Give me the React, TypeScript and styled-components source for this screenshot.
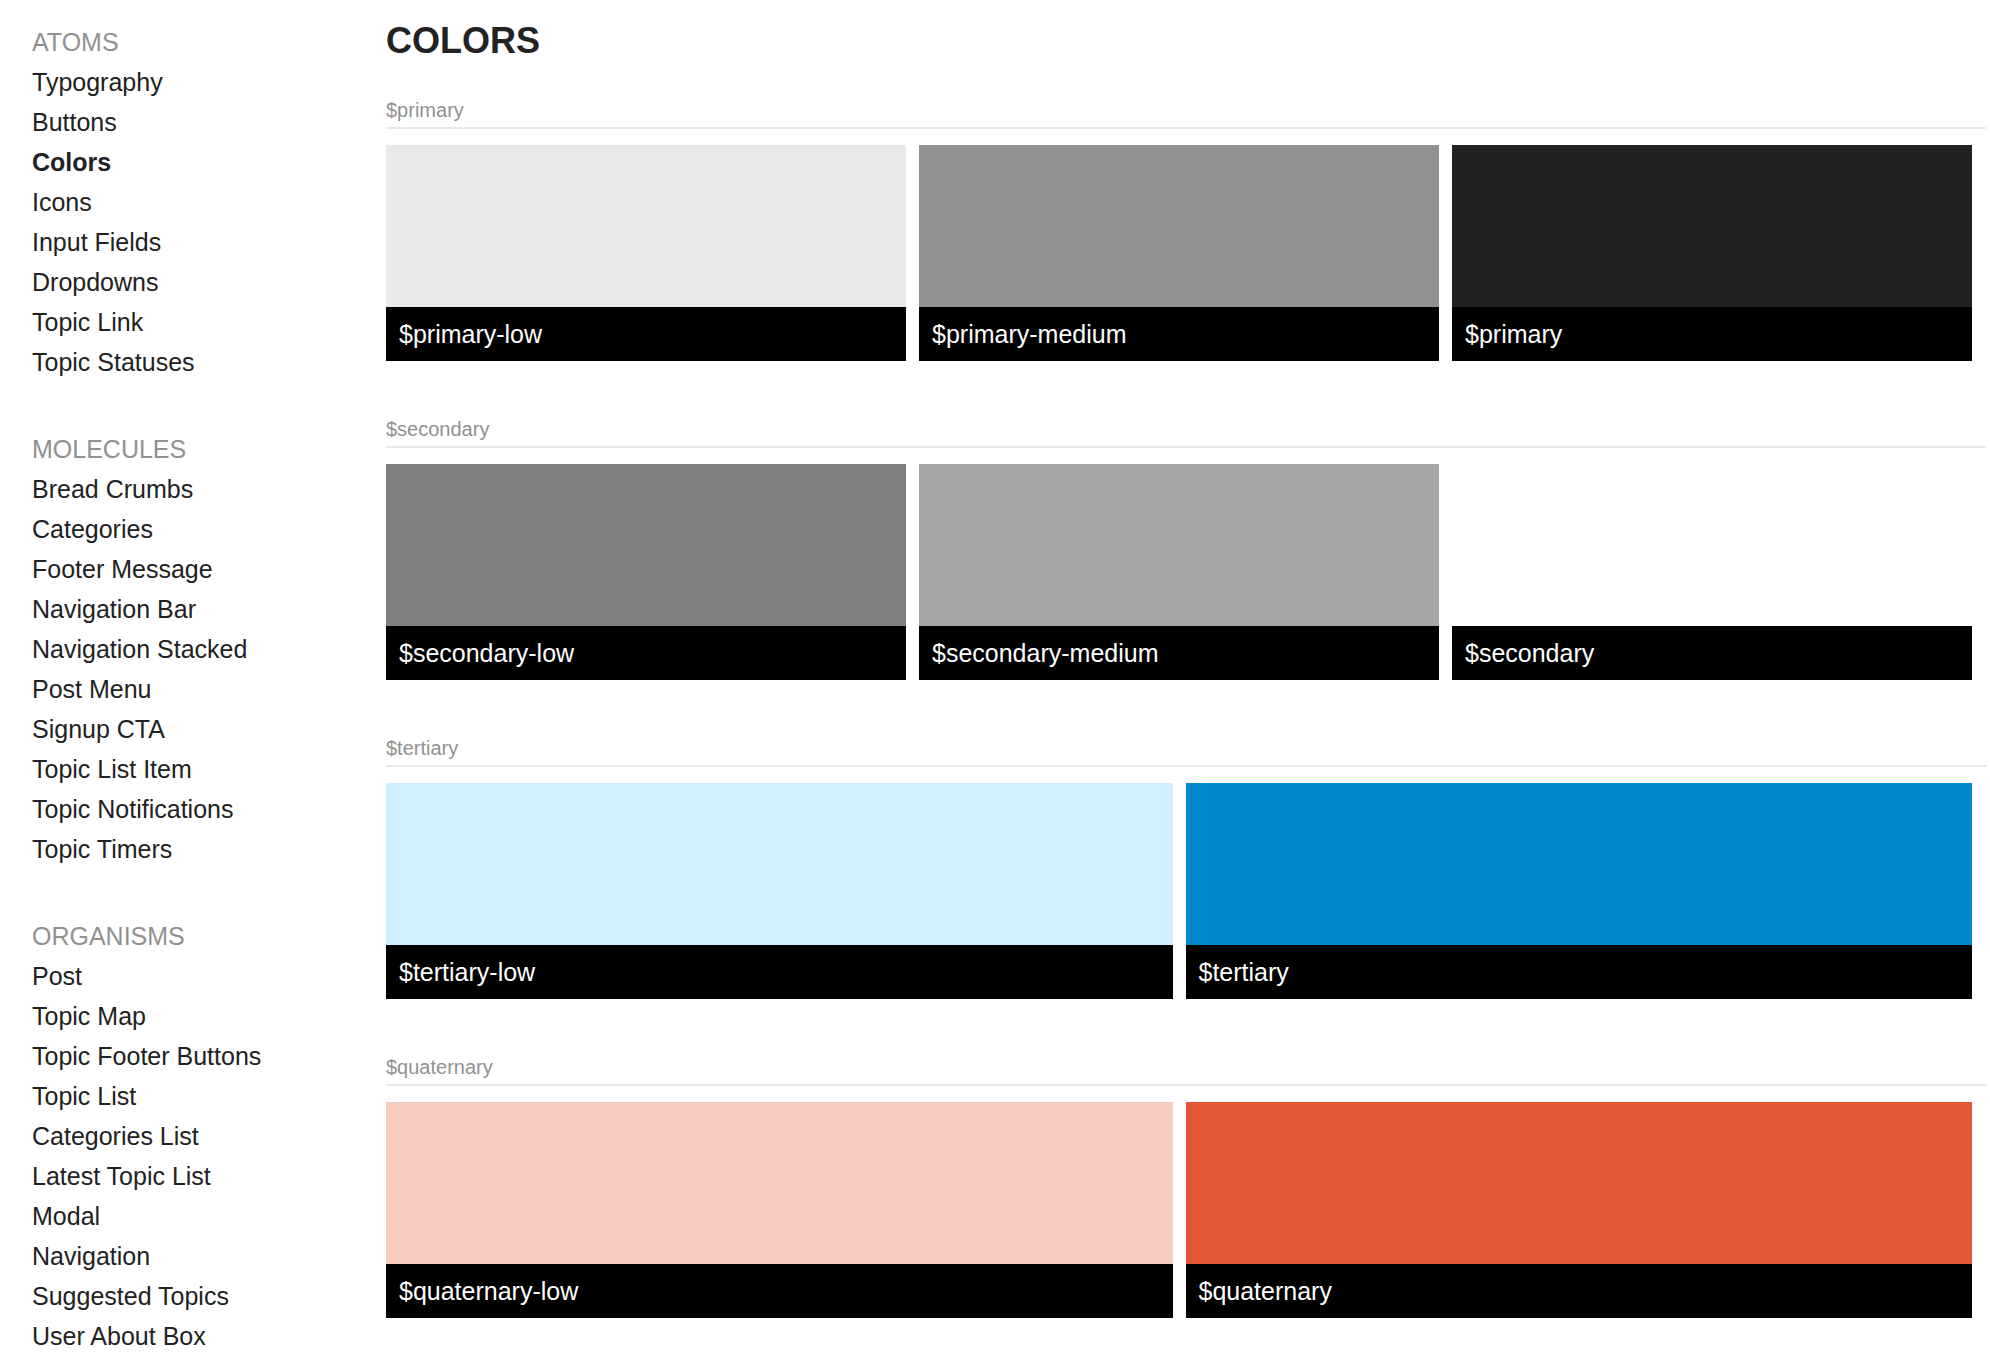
import React from "react";
import styled, { createGlobalStyle } from "styled-components";

const GlobalStyle = createGlobalStyle`
  *, *::before, *::after { box-sizing: border-box; }
  body {
    margin: 0;
    background: #fff;
    color: #222;
    font-family: "Liberation Sans", Helvetica, Arial, sans-serif;
    font-size: 25px;
  }
`;

const Page = styled.div`
  display: grid;
  grid-template-columns: 354px minmax(0, 1fr);
  padding: 22px 4px 12px 32px;
`;

const Sidebar = styled.nav`
  display: flex;
  flex-direction: column;
  gap: 47px;
`;

const GroupTitle = styled.h2`
  margin: 0;
  font-size: 25px;
  font-weight: 400;
  line-height: 40px;
  color: #919191;
  text-transform: uppercase;
`;

const LinkList = styled.ul`
  margin: 0;
  padding: 0;
  list-style: none;
`;

const NavLink = styled.a<{ $active: boolean }>`
  display: block;
  line-height: 40px;
  color: #222;
  font-weight: ${(p) => (p.$active ? 700 : 400)};
  text-decoration: none;
`;

const Title = styled.h1`
  margin: 0 0 38px;
  font-size: 36px;
  line-height: 38px;
  text-transform: uppercase;
`;

const Sections = styled.div`
  display: flex;
  flex-direction: column;
  gap: 56px;
`;

const SectionTitle = styled.h3`
  margin: 0 0 16px;
  padding-bottom: 5px;
  border-bottom: 2px solid #e9e9e9;
  font-size: 20px;
  font-weight: 400;
  line-height: 24px;
  color: #919191;
`;

const SwatchRow = styled.div`
  display: flex;
  gap: 13px;
  padding-right: 14px;
`;

const Swatch = styled.div`
  flex: 1;
  min-width: 0;
`;

const SwatchColor = styled.div<{ $color: string }>`
  height: 162px;
  background: ${(p) => p.$color};
`;

const SwatchLabel = styled.div`
  padding: 13px;
  background: #000;
  color: #fff;
  line-height: 28px;
`;

const groups = [
  {
    title: "Atoms",
    items: ["Typography", "Buttons", "Colors", "Icons", "Input Fields", "Dropdowns", "Topic Link", "Topic Statuses"],
  },
  {
    title: "Molecules",
    items: [
      "Bread Crumbs", "Categories", "Footer Message", "Navigation Bar", "Navigation Stacked",
      "Post Menu", "Signup CTA", "Topic List Item", "Topic Notifications", "Topic Timers",
    ],
  },
  {
    title: "Organisms",
    items: [
      "Post", "Topic Map", "Topic Footer Buttons", "Topic List", "Categories List",
      "Latest Topic List", "Modal", "Navigation", "Suggested Topics", "User About Box",
    ],
  },
];

const sections = [
  {
    name: "$primary",
    swatches: [["$primary-low", "#e9e9e9"], ["$primary-medium", "#919191"], ["$primary", "#222222"]],
  },
  {
    name: "$secondary",
    swatches: [["$secondary-low", "#808080"], ["$secondary-medium", "#a6a6a6"], ["$secondary", "#ffffff"]],
  },
  {
    name: "$tertiary",
    swatches: [["$tertiary-low", "#d1f0ff"], ["$tertiary", "#0088cc"]],
  },
  {
    name: "$quaternary",
    swatches: [["$quaternary-low", "#f7cdc2"], ["$quaternary", "#e45735"]],
  },
];

const activeItem = "Colors";

export default function App() {
  return (
    <>
      <GlobalStyle />
      <Page>
        <Sidebar aria-label="Styleguide">
          {groups.map((group) => (
            <section key={group.title}>
              <GroupTitle>{group.title}</GroupTitle>
              <LinkList>
                {group.items.map((item) => (
                  <li key={item}>
                    <NavLink
                      href={`#${item.toLowerCase().replace(/ /g, "-")}`}
                      $active={item === activeItem}
                      aria-current={item === activeItem ? "page" : undefined}
                    >
                      {item}
                    </NavLink>
                  </li>
                ))}
              </LinkList>
            </section>
          ))}
        </Sidebar>
        <main>
          <Title>Colors</Title>
          <Sections>
            {sections.map((section) => (
              <section key={section.name}>
                <SectionTitle>{section.name}</SectionTitle>
                <SwatchRow>
                  {section.swatches.map(([label, color]) => (
                    <Swatch key={label}>
                      <SwatchColor $color={color} />
                      <SwatchLabel>{label}</SwatchLabel>
                    </Swatch>
                  ))}
                </SwatchRow>
              </section>
            ))}
          </Sections>
        </main>
      </Page>
    </>
  );
}
